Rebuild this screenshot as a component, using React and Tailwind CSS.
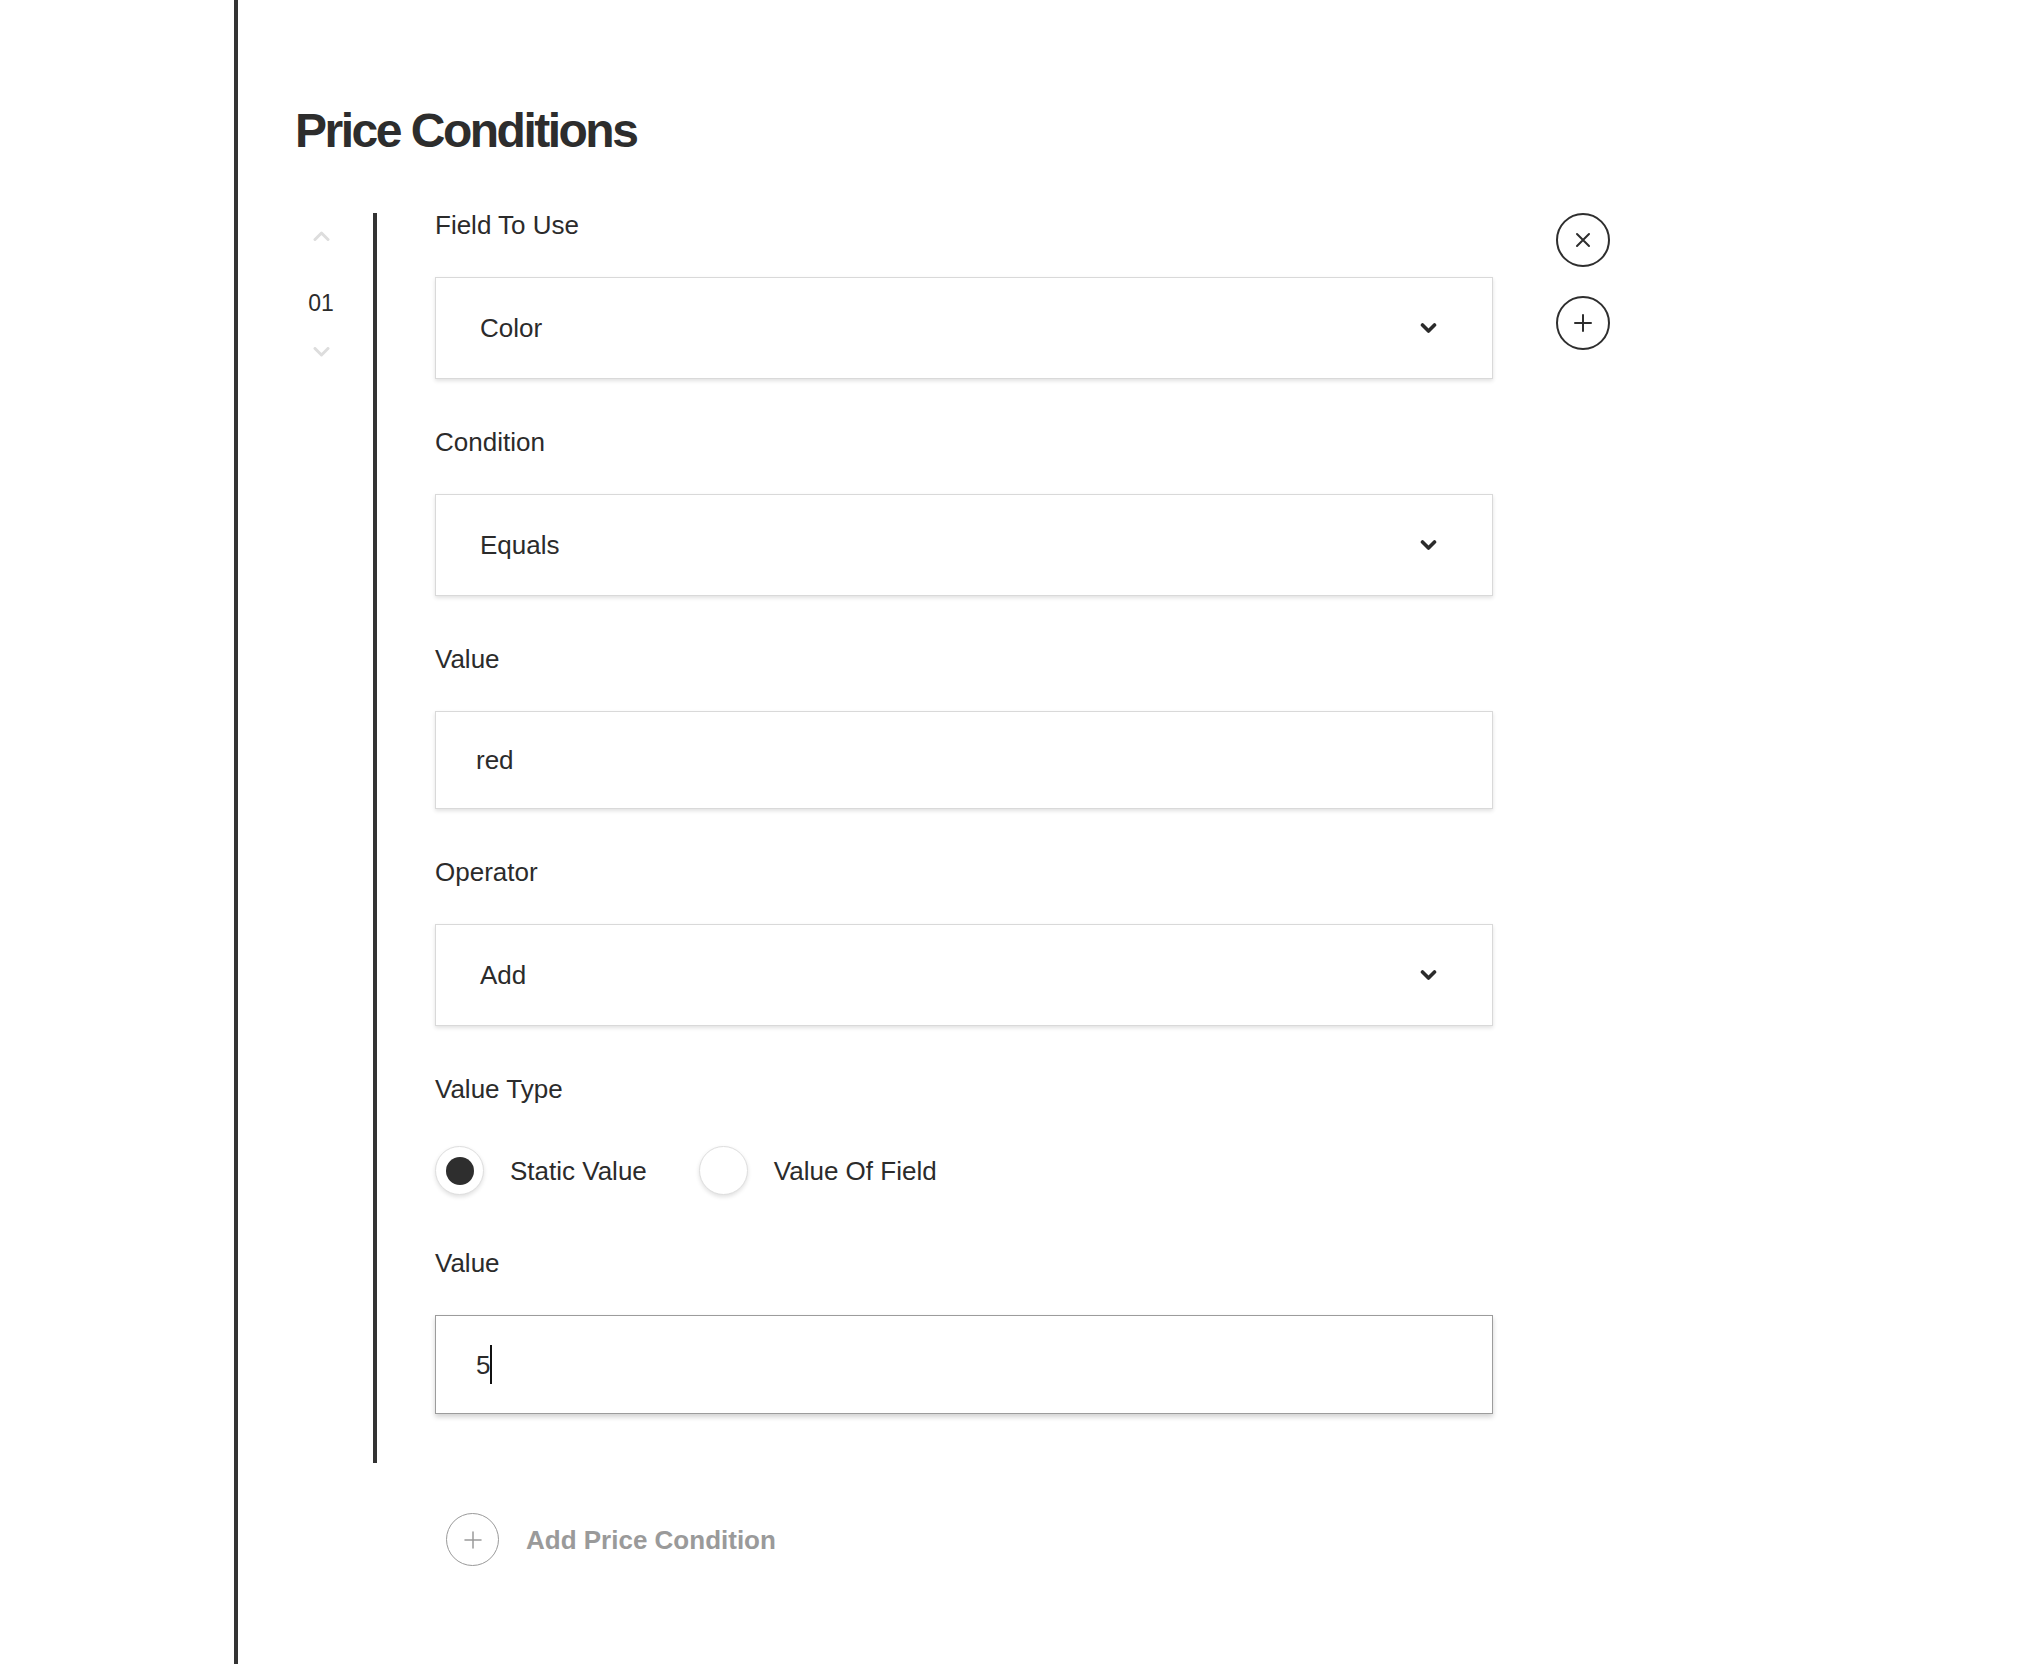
import { useState } from 'react';

const FONT = "font-['Liberation_Sans',Arial,sans-serif]";

function Chevron({ up, className }) {
  return (
    <svg width="17" height="10" viewBox="0 0 17 10" className={className} fill="none">
      <polyline
        points={up ? '2,8.5 8.5,2 15,8.5' : '2,1.5 8.5,8 15,1.5'}
        stroke="currentColor" strokeWidth="3" strokeLinecap="round" strokeLinejoin="round"
      />
    </svg>
  );
}

function SelectBox({ value }) {
  return (
    <div className="h-[102px] w-full flex items-center justify-between bg-white border border-[#d9d9d9] shadow-[0_2px_4px_rgba(0,0,0,0.12)] pl-[44px] pr-[55px]">
      <span className="text-[26px] leading-none text-[#2b2b2b]">{value}</span>
      <svg width="17" height="12" viewBox="0 0 17 12" fill="none">
        <polyline points="2.5,3 8.5,9 14.5,3" stroke="#2b2b2b" strokeWidth="3.6" strokeLinecap="round" strokeLinejoin="round" />
      </svg>
    </div>
  );
}

function Field({ label, children, last }) {
  return (
    <div className={last ? '' : 'mb-[51px]'}>
      <div className="text-[26px] leading-[24px] text-[#2b2b2b]">{label}</div>
      <div className="mt-[40px]">{children}</div>
    </div>
  );
}

function Radio({ checked, label, onClick }) {
  return (
    <button type="button" onClick={onClick} className="flex items-center gap-[26px]">
      <span className="w-[49px] h-[49px] rounded-full bg-white border border-[#dedede] shadow-[0_2px_4px_rgba(0,0,0,0.12)] flex items-center justify-center">
        {checked && <span className="w-[28px] h-[28px] rounded-full bg-[#2e2e2e]" />}
      </span>
      <span className="text-[26px] leading-none text-[#2b2b2b]">{label}</span>
    </button>
  );
}

function CircleButton({ children }) {
  return (
    <button type="button" className="w-[54px] h-[54px] rounded-full border-2 border-[#2e2e2e] flex items-center justify-center text-[#2e2e2e]">
      {children}
    </button>
  );
}

export default function App() {
  const [valueType, setValueType] = useState('static');

  return (
    <div className={`min-h-[1664px] bg-white flex ${FONT}`}>
      <div className="w-[234px] shrink-0" />
      <div className="flex-1 border-l-4 border-[#333333] pl-[57px] pt-[103px]">
        <h1 className="text-[48px] leading-[56px] font-bold tracking-[-2.5px] text-[#2d2d2d]">Price Conditions</h1>

        <div className="flex mt-[54px]">
          {/* order controls */}
          <div className="w-[52px] flex flex-col items-center pt-[18px]">
            <Chevron up className="text-[#dddddd]" />
            <div className="mt-[50px] text-[23px] leading-[24px] text-[#2b2b2b]">01</div>
            <Chevron className="mt-[32px] text-[#dddddd]" />
          </div>
          <div className="ml-[26px] w-1 bg-[#333333]" />

          {/* fields */}
          <div className="w-[1116px] pl-[58px] pb-[49px]">
            <Field label="Field To Use"><SelectBox value="Color" /></Field>
            <Field label="Condition"><SelectBox value="Equals" /></Field>
            <Field label="Value">
              <div className="h-[98px] flex items-center bg-white border border-[#d9d9d9] shadow-[0_2px_4px_rgba(0,0,0,0.12)] pl-[40px]">
                <span className="text-[26px] leading-none text-[#2b2b2b]">red</span>
              </div>
            </Field>
            <Field label="Operator"><SelectBox value="Add" /></Field>
            <div className="mb-[56px]">
              <div className="text-[26px] leading-[24px] text-[#2b2b2b]">Value Type</div>
              <div className="mt-[45px] flex items-center gap-[52px]">
                <Radio checked={valueType === 'static'} label="Static Value" onClick={() => setValueType('static')} />
                <Radio checked={valueType === 'field'} label="Value Of Field" onClick={() => setValueType('field')} />
              </div>
            </div>
            <Field label="Value" last>
              <div className="h-[99px] flex items-center bg-white border border-[#9c9c9c] shadow-[0_3px_5px_rgba(0,0,0,0.18)] pl-[40px]">
                <span className="text-[26px] leading-none text-[#2b2b2b]">5</span>
                <span className="w-[1.5px] h-[39px] bg-[#111111]" />
              </div>
            </Field>
          </div>

          {/* row actions */}
          <div className="ml-[63px] flex flex-col gap-[29px]">
            <CircleButton>
              <svg width="16" height="16" viewBox="0 0 16 16" fill="none">
                <path d="M2 2L14 14M14 2L2 14" stroke="currentColor" strokeWidth="2" strokeLinecap="round" />
              </svg>
            </CircleButton>
            <CircleButton>
              <svg width="18" height="18" viewBox="0 0 18 18" fill="none">
                <path d="M9 1V17M1 9H17" stroke="currentColor" strokeWidth="2" strokeLinecap="round" />
              </svg>
            </CircleButton>
          </div>
        </div>

        <button type="button" className="mt-[50px] ml-[151px] flex items-center gap-[27px]">
          <span className="w-[53px] h-[53px] rounded-full border-[1.5px] border-[#9a9a9a] flex items-center justify-center">
            <svg width="18" height="18" viewBox="0 0 18 18" fill="none">
              <path d="M9 1V17M1 9H17" stroke="#9a9a9a" strokeWidth="1.5" strokeLinecap="round" />
            </svg>
          </span>
          <span className="text-[26px] leading-none font-bold text-[#9a9a9a]">Add Price Condition</span>
        </button>
      </div>
    </div>
  );
}
